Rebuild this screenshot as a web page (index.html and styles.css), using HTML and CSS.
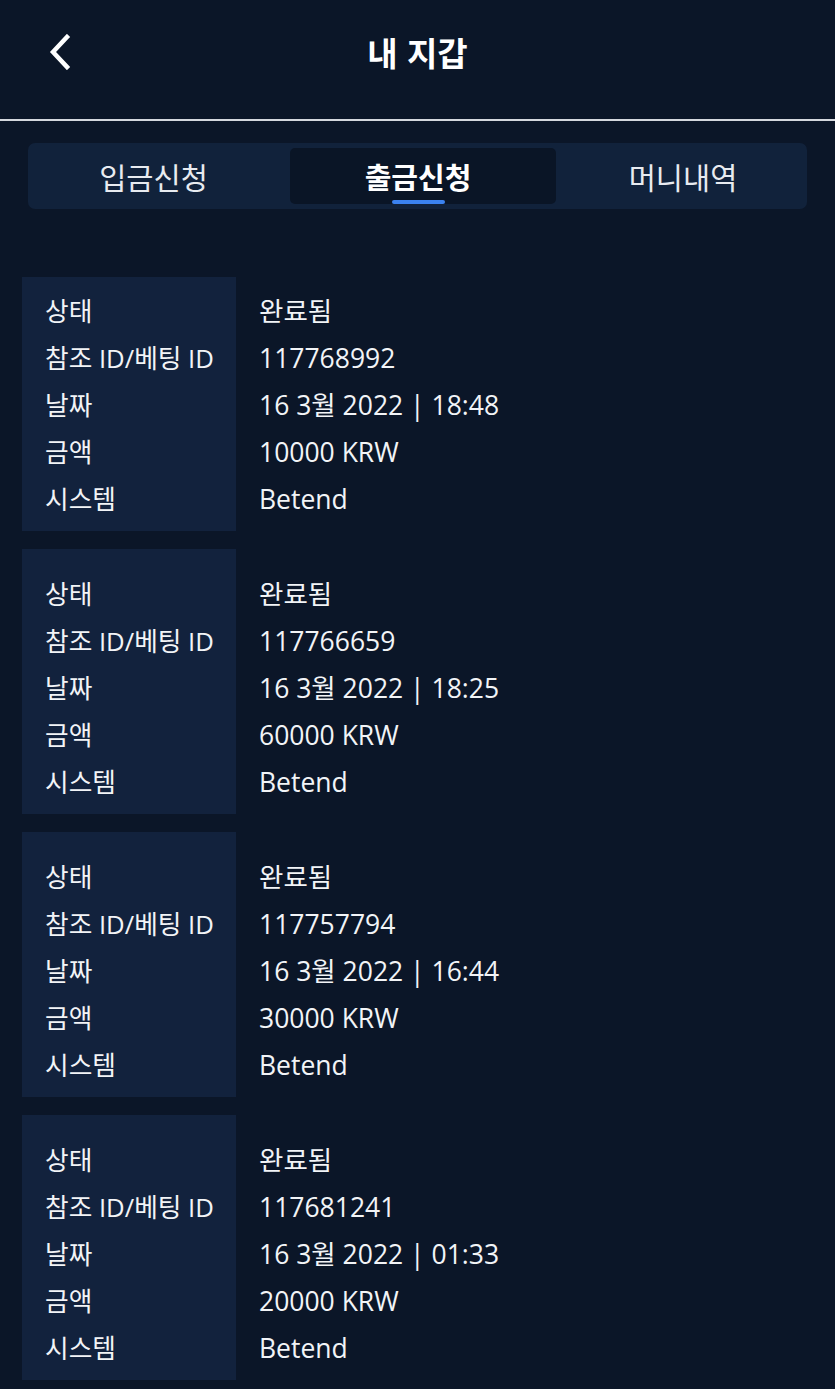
FILE: index.html
```html
<!DOCTYPE html>
<html lang="ko">

<head>
    <meta charset="UTF-8">
    <meta name="viewport" content="width=device-width, initial-scale=1.0">
    <title>내 지갑</title>
    <link rel="stylesheet" href="styles.css">
</head>

<body>
    <div class="header">
        <a class="back" href="#">
            <svg width="26" height="36" viewBox="0 0 26 36">
                <path d="M20 3 L6 18 L20 33" fill="none" stroke="#ffffff" stroke-width="4.5" stroke-linecap="square" />
            </svg>
        </a>
        <h1 class="title">내 지갑</h1>
    </div>

    <div class="tabs">
        <div class="tab first">입금신청</div>
        <div class="tab active">출금신청</div>
        <div class="tab last">머니내역</div>
    </div>

    <div class="list">
        <div class="card">
            <div class="labels">
                <div>상태</div>
                <div>참조 ID/베팅 ID</div>
                <div>날짜</div>
                <div>금액</div>
                <div>시스템</div>
            </div>
            <div class="values">
                <div>완료됨</div>
                <div>117768992</div>
                <div>16 3월 2022 | 18:48</div>
                <div>10000 KRW</div>
                <div>Betend</div>
            </div>
        </div>

        <div class="card">
            <div class="labels">
                <div>상태</div>
                <div>참조 ID/베팅 ID</div>
                <div>날짜</div>
                <div>금액</div>
                <div>시스템</div>
            </div>
            <div class="values">
                <div>완료됨</div>
                <div>117766659</div>
                <div>16 3월 2022 | 18:25</div>
                <div>60000 KRW</div>
                <div>Betend</div>
            </div>
        </div>

        <div class="card">
            <div class="labels">
                <div>상태</div>
                <div>참조 ID/베팅 ID</div>
                <div>날짜</div>
                <div>금액</div>
                <div>시스템</div>
            </div>
            <div class="values">
                <div>완료됨</div>
                <div>117757794</div>
                <div>16 3월 2022 | 16:44</div>
                <div>30000 KRW</div>
                <div>Betend</div>
            </div>
        </div>

        <div class="card">
            <div class="labels">
                <div>상태</div>
                <div>참조 ID/베팅 ID</div>
                <div>날짜</div>
                <div>금액</div>
                <div>시스템</div>
            </div>
            <div class="values">
                <div>완료됨</div>
                <div>117681241</div>
                <div>16 3월 2022 | 01:33</div>
                <div>20000 KRW</div>
                <div>Betend</div>
            </div>
        </div>
    </div>
</body>

</html>
```

FILE: styles.css
```css
body {
    margin: 0;
    background-color: #0b1628;
    color: #ffffff;
    font-family: "Open Sans", "Noto Sans CJK KR", sans-serif;
}

.header {
    position: relative;
    height: 119px;
    border-bottom: 2px solid #d4d8de;
    display: flex;
    align-items: center;
    justify-content: center;
}

.back {
    position: absolute;
    left: 47px;
    top: 34px;
    display: block;
    height: 36px;
}

.title {
    margin: 0 0 15px 0;
    font-family: "Noto Sans CJK KR", sans-serif;
    font-size: 33px;
    font-weight: 700;
}

.tabs {
    display: grid;
    grid-template-columns: 257px 266px 1fr;
    margin: 22px 28px 0 28px;
    padding: 5px;
    height: 56px;
    background-color: #11223b;
    border-radius: 7px;
}

.tab {
    position: relative;
    display: flex;
    align-items: center;
    justify-content: center;
    font-family: "Noto Sans CJK KR", sans-serif;
    font-size: 29.5px;
    color: #e8ebf0;
    border-radius: 5px;
}

.tab.first {
    padding-right: 16px;
}

.tab.last {
    padding-left: 8px;
}

.tab.active {
    background-color: #0a1526;
    color: #ffffff;
    font-weight: 700;
    font-size: 29px;
    padding-right: 10px;
}

.tab.active::after {
    content: "";
    position: absolute;
    left: 102px;
    bottom: 0;
    width: 53px;
    height: 4px;
    border-radius: 2px;
    background-color: #3b82f0;
}

.list {
    display: flex;
    flex-direction: column;
    gap: 18px;
    margin: 68px 0 0 22px;
    padding-bottom: 10px;
}

.card {
    display: flex;
    font-size: 25.7px;
    line-height: 47px;
}

.labels {
    width: 214px;
    padding: 22px 0 8px 23px;
    box-sizing: border-box;
    background-color: #12223d;
    color: #f2f4f7;
}

.card:first-child .labels {
    padding-top: 11px;
}

.values {
    padding: 22px 0 8px 23px;
    font-size: 26.5px;
    color: #f2f4f7;
}

.card:first-child .values {
    padding-top: 11px;
}
```
